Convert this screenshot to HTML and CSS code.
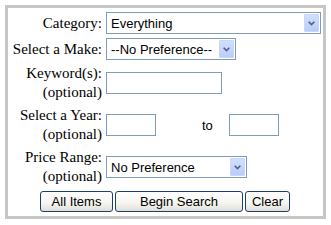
FILE: index.html
```html
<!DOCTYPE html>
<html lang="en">
<head>
    <meta charset="UTF-8">
    <title>Search</title>
    <link rel="stylesheet" href="styles.css">
</head>
<body>
    <form class="search-box">
        <div class="search-form">
            <label class="lbl">Category:</label>
            <div class="dropdown wide">
                <select><option>Everything</option></select>
                <span class="drop-btn"><svg viewBox="0 0 16 18"><path d="M4.5 7.5L8 11L11.5 7.5" fill="none" stroke="#4d6185" stroke-width="2"/></svg></span>
            </div>

            <label class="lbl">Select a Make:</label>
            <div class="dropdown make">
                <select><option>--No Preference--</option></select>
                <span class="drop-btn"><svg viewBox="0 0 16 18"><path d="M4.5 7.5L8 11L11.5 7.5" fill="none" stroke="#4d6185" stroke-width="2"/></svg></span>
            </div>

            <label class="lbl">Keyword(s):<br>(optional)</label>
            <div><input type="text" class="txt keyword"></div>

            <label class="lbl">Select a Year:<br>(optional)</label>
            <div class="year-row">
                <input type="text" class="txt year">
                <span class="to">to</span>
                <input type="text" class="txt year">
            </div>

            <label class="lbl">Price Range:<br>(optional)</label>
            <div class="dropdown price">
                <select><option>No Preference</option></select>
                <span class="drop-btn"><svg viewBox="0 0 16 18"><path d="M4.5 7.5L8 11L11.5 7.5" fill="none" stroke="#4d6185" stroke-width="2"/></svg></span>
            </div>

            <div class="buttons">
                <button type="button" class="btn btn-all">All Items</button>
                <button type="button" class="btn btn-search">Begin Search</button>
                <button type="reset" class="btn btn-clear">Clear</button>
            </div>
        </div>
    </form>
</body>
</html>
```
FILE: styles.css
```css
body { margin: 0; background: #fff; }
.search-box {
    margin: 5px; width: 315px; height: 208px;
    border: 3px solid #c6c6c6; background: #fff;
}
.search-form {
    display: grid; grid-template-columns: 91px 1fr; column-gap: 4px; row-gap: 4px;
    align-items: center; padding: 4px 2px 4px 3px;
}
.lbl {
    font-family: "Liberation Serif", "Times New Roman", serif; font-size: 15px;
    line-height: 19px; color: #000; text-align: right; white-space: nowrap;
}
.dropdown { position: relative; height: 22px; }
.dropdown select {
    appearance: none; -webkit-appearance: none; width: 100%; height: 22px; margin: 0;
    border: 1px solid #7f9db9; border-radius: 0; background: #fff; padding: 0 20px 0 4px;
    font-family: "Liberation Sans", Arial, sans-serif; font-size: 13px; color: #000;
}
.drop-btn {
    position: absolute; top: 2px; right: 2px; width: 15px; height: 18px; pointer-events: none;
    background: linear-gradient(#d2defd, #b9cdfa); border: 1px solid #c7d6fb; box-sizing: border-box;
    border-radius: 1px;
}
.drop-btn svg { display: block; width: 100%; height: 100%; }
.wide { width: 215px; }
.make { width: 130px; }
.price { width: 141px; }
.txt {
    display: block; height: 22px; box-sizing: border-box; margin: 0; padding: 0 3px;
    border: 1px solid #7f9db9; background: #fff;
    font-family: "Liberation Sans", Arial, sans-serif; font-size: 13px;
}
.keyword { width: 116px; }
.year { width: 50px; }
.year-row { display: flex; align-items: center; }
.to {
    font-family: "Liberation Sans", Arial, sans-serif; font-size: 13px; color: #000;
    margin: 0 16px 0 46px;
}
.buttons {
    grid-column: 1 / -1; display: flex; justify-content: center; gap: 2px;
    margin-top: 1px; padding-right: 2px;
}
.btn {
    height: 21px; margin: 0; padding: 0; border: 1px solid #1c3f72; border-radius: 3px;
    background: linear-gradient(#ffffff, #f4f4f0 60%, #e2ded4);
    font-family: "Liberation Sans", Arial, sans-serif; font-size: 13px; color: #000;
}
.btn-all { width: 73px; }
.btn-search { width: 128px; }
.btn-clear { width: 45px; }
```
